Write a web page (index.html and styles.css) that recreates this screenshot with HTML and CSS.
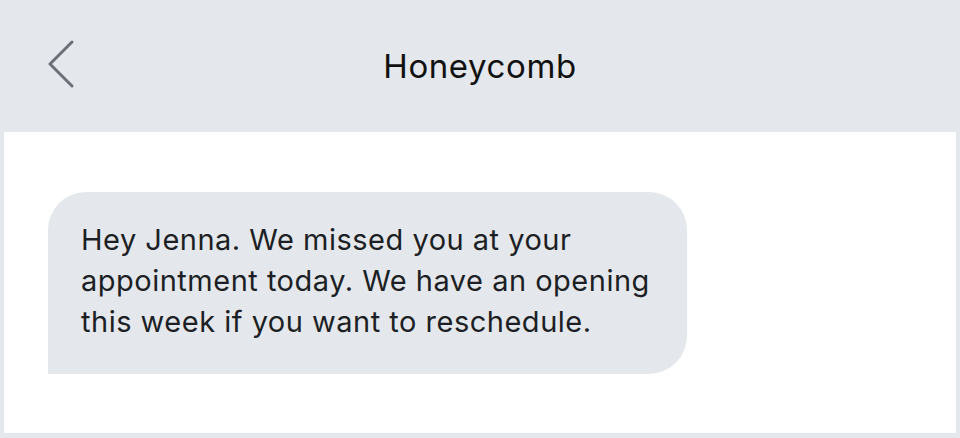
FILE: index.html
```html
<!DOCTYPE html>
<html lang="en">
<head>
    <meta charset="UTF-8">
    <meta name="viewport" content="width=device-width, initial-scale=1.0">
    <title>Honeycomb</title>
    <link rel="stylesheet" href="styles.css">
</head>
<body>
    <header class="topbar">
        <button class="back" aria-label="Back">
            <svg width="28" height="50" viewBox="0 0 28 50">
                <path d="M25 3 L3 25 L25 47" fill="none" stroke="#6b7078" stroke-width="3" stroke-linecap="round" stroke-linejoin="round"/>
            </svg>
        </button>
        <h1 class="title">Honeycomb</h1>
    </header>

    <main class="thread">
        <div class="bubble">
            Hey Jenna. We missed you at your appointment today. We have an opening this week if you want to reschedule.
        </div>
    </main>
</body>
</html>
```

FILE: styles.css
```css
body {
    margin: 0;
    padding: 0;
    background-color: #e4e7eb;
    font-family: Inter, "Noto Sans", sans-serif;
    height: 438px;
    overflow: hidden;
}

.topbar {
    position: relative;
    height: 132px;
    display: flex;
    align-items: center;
    justify-content: center;
}

.back {
    position: absolute;
    left: 47px;
    top: 39px;
    padding: 0;
    border: none;
    background: none;
    cursor: pointer;
}

.back svg {
    display: block;
}

.title {
    margin: 0;
    font-size: 33px;
    font-weight: 400;
    letter-spacing: 0.6px;
    color: #111;
}

.thread {
    background-color: #fff;
    margin: 0 4px;
    height: 301px;
    padding: 60px 0 0 44px;
    box-sizing: border-box;
}

.bubble {
    width: 639px;
    box-sizing: border-box;
    padding: 27px 30px 32px 33px;
    background-color: #e4e7eb;
    border-radius: 38px 38px 38px 0;
    font-size: 29px;
    line-height: 41px;
    letter-spacing: 0.5px;
    color: #1c1f24;
}
```
